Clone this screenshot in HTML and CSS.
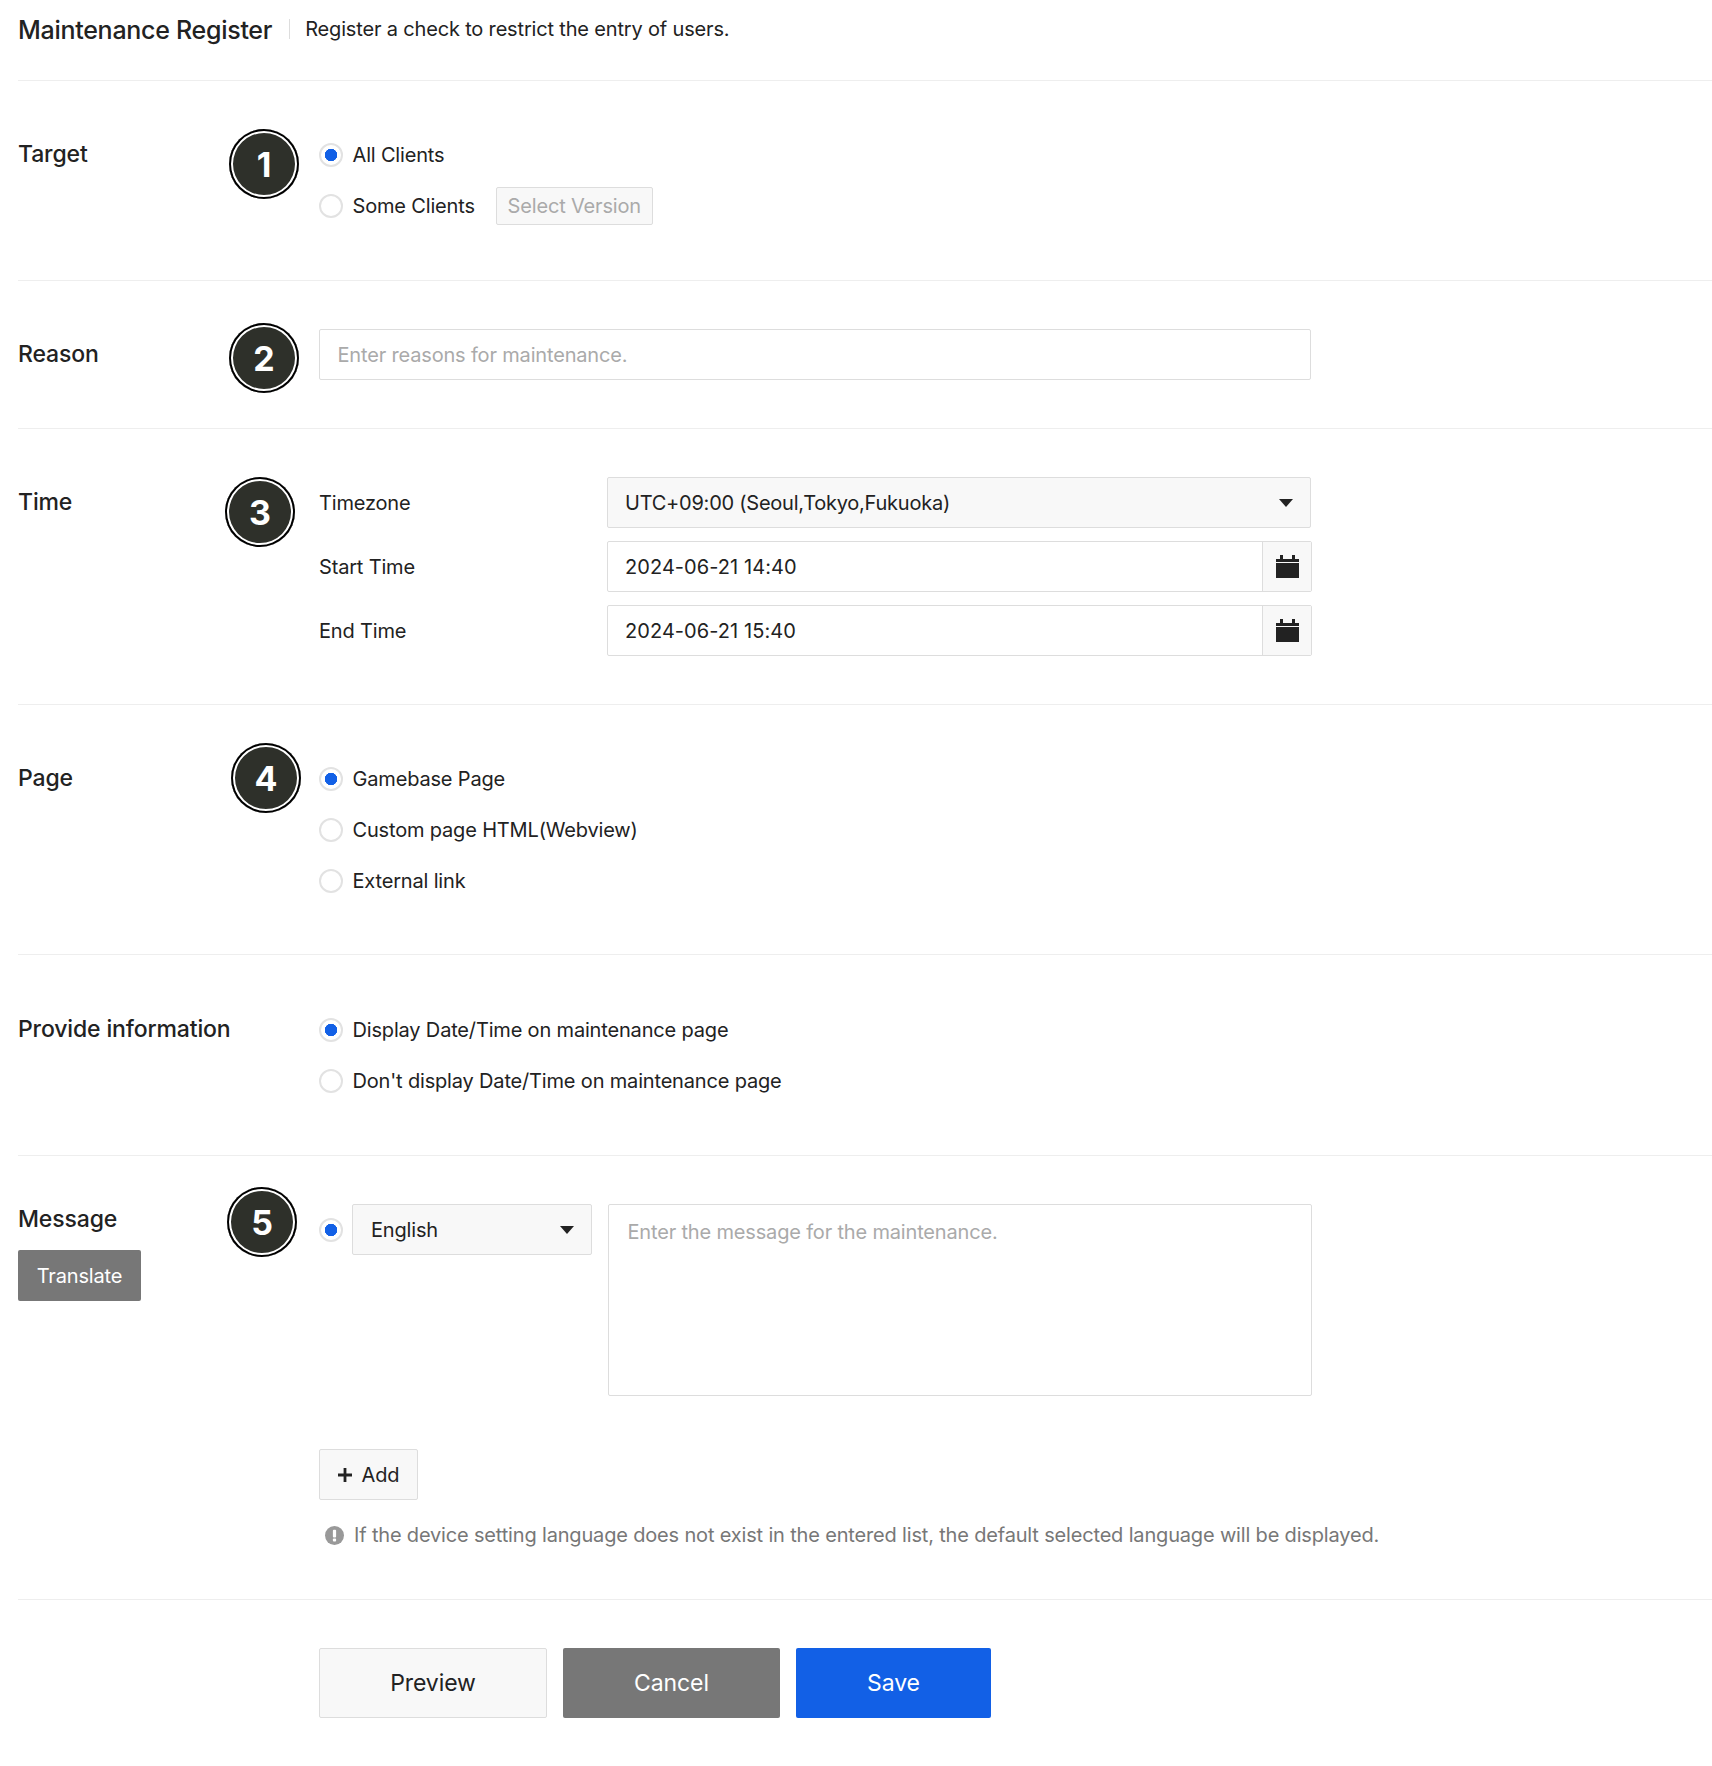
FILE: index.html
```html
<!DOCTYPE html>
<html lang="en">
<head>
<meta charset="utf-8">
<title>Maintenance Register</title>
<link rel="stylesheet" href="styles.css">
</head>
<body>
<header class="head">
  <h1 class="head-title">Maintenance Register</h1>
  <p class="head-sub">Register a check to restrict the entry of users.</p>
</header>

<section class="row row-target">
  <h2 class="label">Target</h2>
  <div class="body">
    <label class="opt"><input class="radio" type="radio" name="target" checked><span>All Clients</span></label>
    <div class="opt"><label class="opt"><input class="radio" type="radio" name="target"><span>Some Clients</span></label><button class="btn-version" type="button">Select Version</button></div>
  </div>
  <span class="badge badge-1">1</span>
</section>

<section class="row">
  <h2 class="label">Reason</h2>
  <div class="body">
    <input class="field field-reason" type="text" placeholder="Enter reasons for maintenance.">
  </div>
  <span class="badge badge-2">2</span>
</section>

<section class="row">
  <h2 class="label">Time</h2>
  <div class="body time-grid">
    <span class="time-label">Timezone</span>
    <div class="select select-tz"><span>UTC+09:00 (Seoul,Tokyo,Fukuoka)</span><i class="caret"></i></div>
    <span class="time-label">Start Time</span>
    <div class="date">
      <input class="date-input" type="text" value="2024-06-21 14:40">
      <span class="date-btn"><svg class="cal" viewBox="0 0 23 23"><path d="M4 0h3v4h9V0h3v4h4v3H0V4h4z"/><path d="M0 8h23v15H0z"/></svg></span>
    </div>
    <span class="time-label">End Time</span>
    <div class="date">
      <input class="date-input" type="text" value="2024-06-21 15:40">
      <span class="date-btn"><svg class="cal" viewBox="0 0 23 23"><path d="M4 0h3v4h9V0h3v4h4v3H0V4h4z"/><path d="M0 8h23v15H0z"/></svg></span>
    </div>
  </div>
  <span class="badge badge-3">3</span>
</section>

<section class="row">
  <h2 class="label">Page</h2>
  <div class="body">
    <label class="opt"><input class="radio" type="radio" name="page" checked><span>Gamebase Page</span></label>
    <label class="opt"><input class="radio" type="radio" name="page"><span>Custom page HTML(Webview)</span></label>
    <label class="opt"><input class="radio" type="radio" name="page"><span>External link</span></label>
  </div>
  <span class="badge badge-4">4</span>
</section>

<section class="row row-info">
  <h2 class="label">Provide information</h2>
  <div class="body">
    <label class="opt"><input class="radio" type="radio" name="info" checked><span>Display Date/Time on maintenance page</span></label>
    <label class="opt"><input class="radio" type="radio" name="info"><span>Don't display Date/Time on maintenance page</span></label>
  </div>
</section>

<section class="row row-message">
  <div class="label-stack">
    <h2 class="label label-short">Message</h2>
    <button class="btn-translate" type="button">Translate</button>
  </div>
  <div class="body">
    <div class="lang-row">
      <input class="radio" type="radio" name="lang" checked>
      <div class="select select-lang"><span>English</span><i class="caret"></i></div>
      <textarea class="message" placeholder="Enter the message for the maintenance."></textarea>
    </div>
    <button class="btn-add" type="button"><svg class="plus" viewBox="0 0 14 14"><path d="M5.600 0h2.800v5.600H14v2.800H8.400v5.600H5.600V8.400H0V5.600h5.600z"/></svg>Add</button>
    <p class="note"><svg class="note-icon" viewBox="0 0 20 20"><circle cx="10" cy="10" r="10"/><rect class="note-mark" x="8.300" y="4" width="3.400" height="8" rx="1"/><rect class="note-mark" x="8.300" y="13.200" width="3.400" height="3" rx="1"/></svg>If the device setting language does not exist in the entered list, the default selected language will be displayed.</p>
  </div>
  <span class="badge badge-5">5</span>
</section>

<footer class="actions">
  <button class="act act-preview" type="button">Preview</button>
  <button class="act act-cancel" type="button">Cancel</button>
  <button class="act act-save" type="button">Save</button>
</footer>
</body>
</html>
```
FILE: styles.css
```css
* { box-sizing: border-box; }
html, body { margin: 0; padding: 0; background: #fff; }
body {
  font-family: Inter, "Liberation Sans", sans-serif;
  font-size: 20px;
  letter-spacing: -0.17px;
  color: #222;
  padding-left: 18px;
}
h1, h2, p { margin: 0; font-weight: 500; }
button, input, textarea { font-family: inherit; font-size: 20px; color: inherit; letter-spacing: inherit; }

.head {
  height: 81px;
  display: flex;
  align-items: flex-start;
  padding-top: 13px;
  border-bottom: 1px solid #eee;
}
.head-title {
  font-size: 25px;
  line-height: 32px;
  letter-spacing: -0.28px;
  margin-top: 1px;
  padding-right: 16px;
}
.head-sub {
  font-weight: 400;
  line-height: 32px;
  margin-left: 1px;
  padding-left: 16px;
  background: linear-gradient(#ddd, #ddd) left 6px / 1px 20px no-repeat;
}

.row {
  position: relative;
  display: grid;
  grid-template-columns: 301px 1fr;
  padding: 48px 0;
  border-bottom: 1px solid #eee;
}
.label { font-size: 23px; line-height: 51px; letter-spacing: -0.14px; }
.label-short { line-height: 30px; }
.label-stack { display: flex; flex-direction: column; align-items: flex-start; gap: 16px; }

.badge {
  position: absolute;
  width: 70px;
  height: 70px;
  border-radius: 50%;
  background: #2e302a;
  box-shadow: inset 0 0 0 2px #000, inset 0 0 0 4px #fff;
  color: #fff;
  font-weight: 700;
  font-size: 34px;
  letter-spacing: 0;
  display: flex;
  align-items: center;
  justify-content: center;
}
.badge-1 { left: 211px; top: 48px; }
.badge-2 { left: 211px; top: 42px; }
.badge-3 { left: 207px; top: 48px; }
.badge-4 { left: 213px; top: 38px; }
.badge-5 { left: 209px; top: 31px; }

.opt { display: flex; align-items: center; height: 51px; }
.opt > .opt { height: auto; }
.row-target .opt { height: 51.5px; }
.row-info { padding: 49px 0; }
.radio {
  appearance: none;
  width: 24px;
  height: 24px;
  margin: 0 9.5px 0 0;
  border: 2px solid #e2e2e2;
  border-radius: 50%;
  background: #fff;
  flex: none;
}
.radio:checked { background: radial-gradient(circle, #1260e6 0 6px, #fff 6.500px); }

.btn-version {
  margin-left: 21px;
  width: 157px;
  height: 38px;
  padding: 0;
  border: 1px solid #ddd;
  border-radius: 2px;
  background: #f8f8f8;
  color: #aaa;
}

.field {
  display: block;
  height: 51px;
  padding: 0 17.500px;
  border: 1px solid #ddd;
  border-radius: 2px;
  background: #fff;
}
.field-reason { width: 992px; }
::placeholder { color: #aaa; opacity: 1; }

.time-grid {
  display: grid;
  grid-template-columns: 288px 1fr;
  row-gap: 13px;
  align-items: center;
}
.select {
  height: 51px;
  display: flex;
  align-items: center;
  justify-content: space-between;
  padding: 0 17px;
  border: 1px solid #ddd;
  border-radius: 2px;
  background: #f8f8f8;
}
.select-tz { width: 704px; letter-spacing: -0.24px; }
.select-lang { width: 240px; flex: none; padding-left: 18px; }
.caret {
  width: 0;
  height: 0;
  border-left: 7px solid transparent;
  border-right: 7px solid transparent;
  border-top: 8px solid #222;
}
.date {
  width: 705px;
  height: 51px;
  display: flex;
  border: 1px solid #ddd;
  border-radius: 2px;
}
.date-input {
  flex: 1;
  min-width: 0;
  border: 0;
  padding: 0 17px;
  background: transparent;
  letter-spacing: 0.06px;
  outline: 0;
}
.date-btn {
  width: 49px;
  display: flex;
  align-items: center;
  justify-content: center;
  border-left: 1px solid #ddd;
  background: #f8f8f8;
}
.cal { width: 23px; height: 23px; fill: #222; display: block; }

.lang-row { display: flex; align-items: flex-start; }
.lang-row .radio { margin: 14px 9px 0 0; }
.message {
  display: block;
  width: 704px;
  height: 192px;
  margin-left: 16px;
  padding: 15px 18.500px;
  border: 1px solid #ddd;
  border-radius: 2px;
  resize: none;
  line-height: 24px;
}
.btn-translate {
  width: 123px;
  height: 51px;
  padding: 0;
  border: 0;
  border-radius: 2px;
  background: #777;
  color: #fff;
}
.btn-add {
  display: flex;
  align-items: center;
  justify-content: center;
  gap: 10px;
  width: 99px;
  height: 51px;
  margin-top: 53px;
  padding: 0;
  border: 1px solid #ddd;
  border-radius: 2px;
  background: #f8f8f8;
}
.plus { width: 14px; height: 14px; fill: #222; }
.note {
  display: flex;
  align-items: center;
  margin-top: 20px;
  padding-left: 6px;
  line-height: 30px;
  font-weight: 400;
  color: #777;
}
.note-icon { width: 19px; height: 19px; margin-right: 10px; fill: #999; flex: none; }
.note-mark { fill: #fff; }
.row-message { padding-bottom: 49px; }

.actions {
  display: flex;
  padding: 48px 0 48px 301px;
}
.act {
  height: 70px;
  padding: 0;
  border: 0;
  border-radius: 2px;
  font-size: 23px;
  letter-spacing: -0.1px;
}
.act-preview { width: 228px; background: #f8f8f8; border: 1px solid #ddd; }
.act-cancel { width: 217px; margin-left: 16px; background: #777; color: #fff; }
.act-save { width: 195px; margin-left: 16px; background: #1260e6; color: #fff; }
```
